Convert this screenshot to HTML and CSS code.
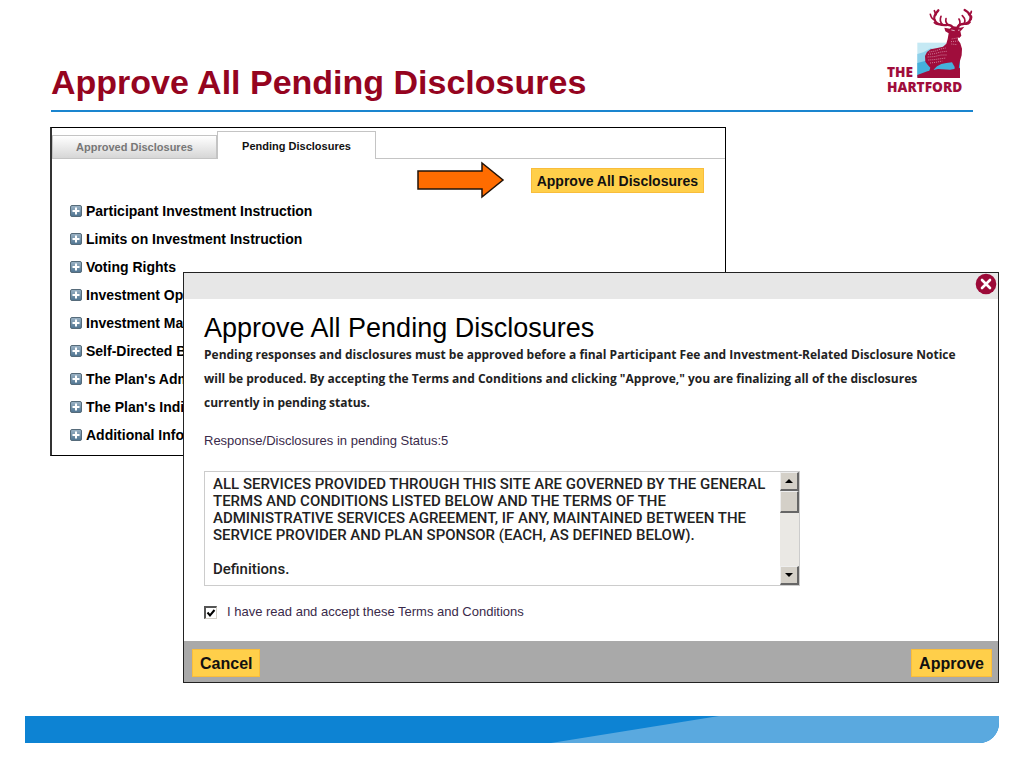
FILE: index.html
```
<!DOCTYPE html>
<html lang="en">
<head>
    <meta charset="UTF-8">
    <meta name="viewport" content="width=device-width, initial-scale=1.0">
    <title>Approve All Pending Disclosures</title>
    <link rel="stylesheet" href="styles.css">
</head>
<body>
    <svg width="0" height="0" class="defs" aria-hidden="true">
        <linearGradient id="plus-fill" x1="0" y1="0" x2="0" y2="1">
            <stop offset="0" stop-color="#9db4c6"/>
            <stop offset="1" stop-color="#4d7390"/>
        </linearGradient>
        <symbol id="plus" viewBox="0 0 12 12">
            <rect x="0.5" y="0.5" width="11" height="11" rx="1.5" fill="url(#plus-fill)" stroke="#566b7a"/>
            <path d="M6 2.500v7M2.500 6h7" stroke="#fff" stroke-width="2"/>
        </symbol>
    </svg>

    <header class="slide-header">
        <h1>Approve All Pending Disclosures</h1>
        <svg class="logo" viewBox="48 25 264 264" role="img" aria-label="The Hartford">
            <rect x="145" y="129" width="128" height="104" fill="#c5e9f4"/>
            <path d="M145 163l18-5 22-12 30 10 58-4v80H145z" fill="#8dd0ea"/>
            <path d="M145 190l26-7 40 5 62-8v50H145z" fill="#45b1dc"/>
            <path d="M145 226l30-11 32-7 36 2 30-5v30H145z" fill="#a00d3c"/>
            <!-- stag -->
            <g fill="#a00d3c">
                <path d="M226 84l16 3 10-7 12 1 10 3 12-3-8 10-4 4 3 13-6 7-5-2 1 8 7 10 5 16-1 20-5 16-3 17-1 18h-13l1-16-8-14-17 2-15 3-13 7-9 9-4 12 4 8h-12l-3-13 4-12-7-7-8-11-1-17 6-12 11-8 20-4 17-4 10-9 4-14 3-17-10-6z"/>
                <g fill="none" stroke="#a00d3c" stroke-linecap="round" stroke-linejoin="round">
                    <path d="M252 86c-3-9-10-11-20-10-16 1-27-3-33-11-6-7-5-18 9-33" stroke-width="7"/>
                    <path d="M198 61c-8-2-12-9-14-17M201 45l-5-12M214 73c-8 3-14 0-18-4M220 74c-7-8-8-15-4-24M240 77c-9-5-11-12-9-20" stroke-width="5"/>
                    <path d="M265 85c2-9 8-11 17-12 13-1 20-7 22-15 3-9-2-18-17-27" stroke-width="7"/>
                    <path d="M299 45c5-1 8-5 8-10M303 62c5-3 5-9 4-13M287 73c8 2 13-1 16-5M285 72c5-8 4-15-5-24M270 77c4-6 4-12 0-19" stroke-width="5"/>
                </g>
            </g>
            <g fill="none" stroke="#e6b7c9" stroke-width="2" stroke-dasharray="3 3">
                <path d="M181 157l18-3 16-6 15-3M177 164l20-2 18-5 18-2M176 172l19-1 21-5 17 0M178 181l16-1 22-3 15-2M183 190l17-2 20-4M248 118l17-3M246 126l20-2M247 133l18 2"/>
            </g>
            <path d="M247 91l10 2M267 92l5-1" stroke="#fff" stroke-width="2"/>
            <text x="54" y="233" class="logo-text">THE</text>
            <text x="54" y="276" class="logo-text">HARTFORD</text>
        </svg>
    </header>

    <main class="stage">
        <section class="panel">
            <div class="tabs" role="tablist">
                <button type="button" class="tab" role="tab" aria-selected="false">Approved Disclosures</button>
                <button type="button" class="tab active" role="tab" aria-selected="true">Pending Disclosures</button>
            </div>
            <div class="panel-actions">
                <svg class="arrow" width="88" height="38" viewBox="0 0 88 38" aria-hidden="true">
                    <path d="M1 10h64V2l21 17-21 17v-8H1z" fill="#ff6c00" stroke="#221308" stroke-width="1.5"/>
                </svg>
                <button type="button" class="btn btn-small">Approve All Disclosures</button>
            </div>
            <ul class="disclosures">
                <li><svg class="plus"><use href="#plus"/></svg>Participant Investment Instruction</li>
                <li><svg class="plus"><use href="#plus"/></svg>Limits on Investment Instruction</li>
                <li><svg class="plus"><use href="#plus"/></svg>Voting Rights</li>
                <li><svg class="plus"><use href="#plus"/></svg>Investment Op</li>
                <li><svg class="plus"><use href="#plus"/></svg>Investment Ma</li>
                <li><svg class="plus"><use href="#plus"/></svg>Self-Directed B</li>
                <li><svg class="plus"><use href="#plus"/></svg>The Plan's Adm</li>
                <li><svg class="plus"><use href="#plus"/></svg>The Plan's Indi</li>
                <li><svg class="plus"><use href="#plus"/></svg>Additional Infor</li>
            </ul>
        </section>

        <section class="dialog" role="dialog" aria-labelledby="dialog-title">
            <div class="dialog-bar">
                <button type="button" class="close" aria-label="Close">
                    <svg width="22" height="22" viewBox="0 0 22 22">
                        <circle cx="11" cy="11" r="10.3" fill="#9c0a38"/>
                        <path d="M7 7l8 8M15 7l-8 8" stroke="#fff" stroke-width="2.6" stroke-linecap="round"/>
                    </svg>
                </button>
            </div>
            <div class="dialog-body">
                <h2 id="dialog-title">Approve All Pending Disclosures</h2>
                <p class="intro">Pending responses and disclosures must be approved before a final Participant Fee and Investment-Related Disclosure Notice<br>will be produced. By accepting the Terms and Conditions and clicking "Approve," you are finalizing all of the disclosures<br>currently in pending status.</p>
                <p class="status">Response/Disclosures in pending Status:5</p>
                <div class="terms">
                    <div class="terms-text">
                        <p>ALL SERVICES PROVIDED THROUGH THIS SITE ARE GOVERNED BY THE GENERAL<br>TERMS AND CONDITIONS LISTED BELOW AND THE TERMS OF THE<br>ADMINISTRATIVE SERVICES AGREEMENT, IF ANY, MAINTAINED BETWEEN THE<br>SERVICE PROVIDER AND PLAN SPONSOR (EACH, AS DEFINED BELOW).</p>
                        <p>Definitions.</p>
                    </div>
                    <div class="scrollbar">
                        <button type="button" class="scroll-btn" aria-label="Scroll up"><svg width="8" height="4"><path d="M0 4l4-4 4 4z"/></svg></button>
                        <div class="scroll-thumb"></div>
                        <button type="button" class="scroll-btn scroll-down" aria-label="Scroll down"><svg width="8" height="4"><path d="M0 0l4 4 4-4z"/></svg></button>
                    </div>
                </div>
                <div class="accept">
                    <input type="checkbox" id="accept" checked>
                    <label for="accept">I have read and accept these Terms and Conditions</label>
                </div>
            </div>
            <div class="dialog-footer">
                <button type="button" class="btn">Cancel</button>
                <button type="button" class="btn">Approve</button>
            </div>
        </section>
    </main>

    <footer class="slide-footer">
        <svg viewBox="0 0 974 27" preserveAspectRatio="none" aria-hidden="true">
            <path d="M526 27L694 0h280v27z" fill="#5aa9df"/>
        </svg>
    </footer>
</body>
</html>
```
FILE: styles.css
```
* {
    box-sizing: border-box;
}

body {
    margin: 0;
    background: #fff;
    color: #000;
    font-family: "Liberation Sans", Arial, sans-serif;
}

button {
    font-family: inherit;
    cursor: pointer;
}

h1, h2, p, ul {
    margin: 0;
}

.defs {
    display: block;
}

.slide-header {
    display: flex;
    justify-content: space-between;
    align-items: flex-start;
    height: 112px;
    margin: 0 51px;
    padding-top: 8px;
    border-bottom: 2px solid #1a85cf;
}

.slide-header h1 {
    padding-top: 53px;
    color: #95041f;
    font-size: 34px;
    line-height: 42px;
}

.logo {
    width: 88px;
    height: 88px;
}

.logo-text {
    fill: #a00d3c;
    font-family: "Open Sans", sans-serif;
    font-size: 41px;
    font-weight: 800;
}

.stage {
    display: grid;
    grid-template-columns: 133fr 543fr 273fr;
    grid-template-rows: 145px auto;
    margin-top: 15px;
    padding: 0 25px 0 50px;
}

/* pending list */
.panel {
    grid-area: 1 / 1 / 3 / 3;
    align-self: start;
    border: 1px solid #000;
    border-left: 2px solid #333;
    padding-bottom: 6px;
}

.tabs {
    display: flex;
    align-items: flex-end;
    height: 31px;
    padding-top: 3px;
    border-bottom: 1px solid #c4c4c4;
}

.tab {
    width: 165px;
    height: 23px;
    padding: 0;
    border: 1px solid #c4c4c4;
    border-bottom: 0;
    background: linear-gradient(#fff, #d6d6d6);
    color: #777;
    font-size: 11px;
    font-weight: bold;
}

.tab.active {
    width: 159px;
    height: 28px;
    margin-bottom: -1px;
    background: #fff;
    color: #111;
}

.panel-actions {
    display: flex;
    align-items: center;
    justify-content: flex-end;
    gap: 26px;
    height: 38px;
    padding: 4px 21px 0 0;
}

.btn {
    height: 28px;
    padding: 2px 7px 0;
    border: 1px solid #f9bd3b;
    background: #ffcf4a;
    color: #111;
    font-size: 16px;
    font-weight: bold;
}

.btn-small {
    height: 25px;
    padding: 2px 5px 0;
    font-size: 14px;
}

.disclosures {
    padding: 0 0 0 18px;
    list-style: none;
}

.disclosures li {
    display: flex;
    align-items: center;
    gap: 4px;
    height: 28px;
    font-size: 14px;
    font-weight: bold;
    white-space: nowrap;
}

.plus {
    flex: none;
    width: 12px;
    height: 12px;
}

/* dialog over the list */
.dialog {
    grid-area: 2 / 2 / 3 / 4;
    z-index: 1;
    border: 1px solid #222;
    background: #fff;
}

.dialog-bar {
    display: flex;
    justify-content: flex-end;
    height: 26px;
    padding: 0 1px;
    background: #e7e7e7;
}

.close {
    width: 22px;
    height: 22px;
    padding: 0;
    border: 0;
    background: none;
}

.dialog-body {
    padding: 14px 20px 21px;
}

.dialog-body h2 {
    font-size: 27px;
    font-weight: normal;
    line-height: 30px;
}

.intro {
    color: #222;
    font-family: "Open Sans", sans-serif;
    font-size: 12px;
    font-weight: 700;
    line-height: 24px;
    white-space: nowrap;
}

.status {
    margin-top: 18px;
    color: #3a2a4a;
    font-size: 13px;
    line-height: 16px;
}

.terms {
    display: flex;
    width: 596px;
    max-width: 100%;
    margin-top: 22px;
    border: 1px solid #ccc;
}

.terms-text {
    flex: 1;
    min-width: 0;
    padding: 4px 8px 7px;
    color: #222;
    font-family: Roboto, sans-serif;
    font-size: 15px;
    font-weight: 500;
    line-height: 17px;
    white-space: nowrap;
}

.terms-text p + p {
    margin-top: 17px;
}

.scrollbar {
    display: flex;
    flex-direction: column;
    width: 19px;
    background: #eae8e4;
}

.scroll-btn,
.scroll-thumb {
    display: flex;
    align-items: center;
    justify-content: center;
    width: 19px;
    height: 19px;
    padding: 0;
    border: 1px solid #eee;
    border-right: 2px solid #666;
    border-bottom: 2px solid #666;
    background: #d4d0c8;
}

.scroll-thumb {
    height: 22px;
}

.scroll-down {
    margin-top: auto;
}

.accept {
    display: flex;
    align-items: center;
    gap: 10px;
    margin-top: 18px;
    color: #3a2a4a;
    font-size: 13px;
    line-height: 16px;
}

.accept input {
    appearance: none;
    width: 13px;
    height: 13px;
    margin: 0;
    border: 1px solid #d4d0c8;
    border-top: 2px solid #555;
    border-left: 2px solid #555;
    background: #fff;
}

.accept input:checked {
    background: #fff url("data:image/svg+xml,%3Csvg xmlns='http://www.w3.org/2000/svg' viewBox='0 0 10 10'%3E%3Cpath d='M1.5 4.5l2.5 3 4.500-5.500' fill='none' stroke='%23000' stroke-width='2'/%3E%3C/svg%3E") center / 10px 10px no-repeat;
}

.dialog-footer {
    display: flex;
    align-items: center;
    justify-content: space-between;
    height: 41px;
    padding: 2px 6px 0 8px;
    background: #a9a9a9;
}

.slide-footer {
    height: 27px;
    margin: 33px 25px 0;
    overflow: hidden;
    border-radius: 0 0 20px 0;
    background: #0d83d3;
}

.slide-footer svg {
    display: block;
    width: 100%;
    height: 100%;
}
```
